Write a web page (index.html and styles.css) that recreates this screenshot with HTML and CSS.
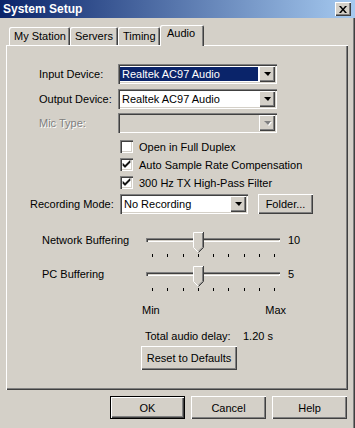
FILE: index.html
```html
<!DOCTYPE html>
<html lang="en">
<head>
    <meta charset="UTF-8">
    <title>System Setup</title>
    <link rel="stylesheet" href="styles.css">
</head>
<body>
    <div class="window">
        <div class="titlebar">
            <span class="title">System Setup</span>
            <div class="close">
                <svg width="8" height="7" viewBox="0 0 8 7"><path d="M0 0h2l2 2.5L6 0h2L5 3.5 8 7H6L4 4.5 2 7H0l3-3.5z" fill="#000"/></svg>
            </div>
        </div>

        <div class="tabs">
            <div class="tab tab-station">My Station</div>
            <div class="tab tab-servers">Servers</div>
            <div class="tab tab-timing">Timing</div>
            <div class="tab tab-audio active">Audio</div>
        </div>

        <div class="panel">
            <div class="device-row first">
                <span class="device-label">Input Device:</span>
                <div class="combo device-combo focused">
                    <span class="combo-text">Realtek AC97 Audio</span>
                    <span class="combo-btn"><span class="arrow"></span></span>
                </div>
            </div>
            <div class="device-row second">
                <span class="device-label">Output Device:</span>
                <div class="combo device-combo">
                    <span class="combo-text">Realtek AC97 Audio</span>
                    <span class="combo-btn"><span class="arrow"></span></span>
                </div>
            </div>
            <div class="device-row third">
                <span class="device-label disabled">Mic Type:</span>
                <div class="combo device-combo off">
                    <span class="combo-text"></span>
                    <span class="combo-btn"><span class="arrow"></span></span>
                </div>
            </div>

            <div class="checks">
                <div class="check"><span class="box"></span>Open in Full Duplex</div>
                <div class="check"><span class="box"><svg width="9" height="9" viewBox="0 0 9 9"><path d="M1 3.5v2l2 2 5-5v-2l-5 5z" fill="#000" stroke="#000" stroke-width=".6"/></svg></span>Auto Sample Rate Compensation</div>
                <div class="check"><span class="box"><svg width="9" height="9" viewBox="0 0 9 9"><path d="M1 3.5v2l2 2 5-5v-2l-5 5z" fill="#000" stroke="#000" stroke-width=".6"/></svg></span>300 Hz TX High-Pass Filter</div>
            </div>

            <div class="record-row">
                <span class="record-label">Recording Mode:</span>
                <div class="combo record-combo">
                    <span class="combo-text">No Recording</span>
                    <span class="combo-btn"><span class="arrow"></span></span>
                </div>
                <div class="button folder-btn">Folder...</div>
            </div>

            <div class="slider-row network">
                <span class="slider-label">Network Buffering</span>
                <div class="slider">
                    <div class="track"></div>
                    <svg class="thumb" width="11" height="21" viewBox="0 0 11 21">
                        <path d="M0 0h11v15.5L5.5 21 0 15.5z" fill="#d4d0c8"/>
                        <path d="M0.5 15.5V0.5h9.5" stroke="#fff" fill="none"/>
                        <path d="M0.5 15.5l5 5" stroke="#fff" fill="none"/>
                        <path d="M10.5 0v15.5l-5 5" stroke="#404040" fill="none"/>
                        <path d="M9.5 1v14.2l-4 4" stroke="#808080" fill="none"/>
                    </svg>
                    <div class="ticks">
                        <i></i><i></i><i></i><i></i><i></i><i></i><i></i><i></i><i></i>
                    </div>
                </div>
                <span class="slider-value">10</span>
            </div>

            <div class="slider-row">
                <span class="slider-label">PC Buffering</span>
                <div class="slider">
                    <div class="track"></div>
                    <svg class="thumb" width="11" height="21" viewBox="0 0 11 21">
                        <path d="M0 0h11v15.5L5.5 21 0 15.5z" fill="#d4d0c8"/>
                        <path d="M0.5 15.5V0.5h9.5" stroke="#fff" fill="none"/>
                        <path d="M0.5 15.5l5 5" stroke="#fff" fill="none"/>
                        <path d="M10.5 0v15.5l-5 5" stroke="#404040" fill="none"/>
                        <path d="M9.5 1v14.2l-4 4" stroke="#808080" fill="none"/>
                    </svg>
                    <div class="ticks">
                        <i></i><i></i><i></i><i></i><i></i><i></i><i></i><i></i><i></i>
                    </div>
                </div>
                <span class="slider-value">5</span>
            </div>

            <div class="scale">
                <span>Min</span>
                <span>Max</span>
            </div>

            <div class="delay-row">
                <span class="delay-label">Total audio delay:</span>
                <span>1.20 s</span>
            </div>

            <div class="reset-row">
                <div class="button reset-btn">Reset to Defaults</div>
            </div>
        </div>

        <div class="actions">
            <div class="button default">OK</div>
            <div class="button">Cancel</div>
            <div class="button">Help</div>
        </div>
    </div>
</body>
</html>
```

FILE: styles.css
```css
html, body {
    margin: 0;
}
body {
    width: 355px;
    height: 428px;
    overflow: hidden;
    background-color: #d4d0c8;
    font-family: 'Liberation Sans', Arial, sans-serif;
    font-size: 11px;
    color: #000;
}
.window {
    height: 428px;
    display: flex;
    flex-direction: column;
    box-shadow: inset -1px 0 #404040, inset -2px 0 #808080;
}

/* title bar */
.titlebar {
    height: 18px;
    display: flex;
    align-items: center;
    justify-content: space-between;
    padding: 0 4px 0 3px;
    background: linear-gradient(to right, #0a246a, #a6caf0);
}
.title {
    color: #fff;
    font-weight: bold;
    font-size: 12px;
}
.close {
    width: 16px;
    height: 14px;
    display: flex;
    align-items: center;
    justify-content: center;
    background-color: #d4d0c8;
    box-shadow: inset 1px 1px #fff, inset -1px -1px #404040, inset -2px -2px #808080;
}

/* tabs */
.tabs {
    display: flex;
    align-items: flex-end;
    height: 20px;
    margin-top: 7px;
    padding-left: 9px;
}
.tab {
    height: 18px;
    line-height: 18px;
    padding-left: 5px;
    box-sizing: border-box;
    border-radius: 2px 2px 0 0;
    box-shadow: inset 1px 1px #fff, inset -1px 0 #404040, inset -2px 0 #808080;
}
.tab-station { width: 61px; }
.tab-servers { width: 48px; }
.tab-timing { width: 42px; }
.tab-audio { width: 44px; padding-left: 7px; }
.tab.active {
    position: relative;
    z-index: 1;
    height: 21px;
    line-height: 17px;
    margin-bottom: -1px;
    background-color: #d4d0c8;
    box-shadow: inset 1px 1px #fff, inset -1px 0 #404040, inset -2px 0 #808080;
}

/* panel */
.panel {
    height: 345px;
    margin: 0 7px 0 6px;
    box-sizing: border-box;
    box-shadow: inset 1px 1px #fff, inset -1px -1px #404040, inset -2px -2px #808080;
}

/* combos */
.combo {
    height: 20px;
    box-sizing: border-box;
    display: flex;
    align-items: stretch;
    padding: 2px;
    background-color: #fff;
    box-shadow: inset 1px 1px #808080, inset 2px 2px #404040, inset -1px -1px #fff, inset -2px -2px #d4d0c8;
}
.combo-text {
    flex: 1;
    line-height: 16px;
    padding-left: 2px;
    white-space: nowrap;
    overflow: hidden;
}
.combo.focused .combo-text {
    background-color: #0a246a;
    color: #fff;
    margin: 1px 1px 1px 0;
    line-height: 14px;
}
.combo.off {
    background-color: #d4d0c8;
}
.combo-btn {
    width: 16px;
    display: flex;
    align-items: center;
    justify-content: center;
    background-color: #d4d0c8;
    box-shadow: inset 1px 1px #fff, inset -1px -1px #404040, inset -2px -2px #808080;
}
.arrow {
    width: 0;
    height: 0;
    border-left: 4px solid transparent;
    border-right: 3px solid transparent;
    border-top: 4px solid #000;
    margin-left: 1px;
}
.combo.off .arrow {
    border-top-color: #808080;
    filter: drop-shadow(1px 1px 0 #fff);
}

.device-row {
    display: flex;
    align-items: center;
    height: 20px;
    padding-left: 33px;
}
.device-row.first { margin-top: 19px; }
.device-row.second { margin-top: 5px; }
.device-row.third { margin-top: 4px; }
.device-label {
    width: 79px;
}
.device-combo {
    width: 159px;
}
.disabled {
    color: #808080;
    text-shadow: 1px 1px 0 #fff;
}

/* checkboxes */
.checks {
    margin-top: 7px;
    padding-left: 114px;
}
.check {
    display: flex;
    align-items: center;
    gap: 6px;
    height: 13px;
    margin-bottom: 5px;
}
.box {
    width: 13px;
    height: 13px;
    box-sizing: border-box;
    display: flex;
    align-items: center;
    justify-content: center;
    background-color: #fff;
    box-shadow: inset 1px 1px #808080, inset 2px 2px #404040, inset -1px -1px #fff, inset -2px -2px #d4d0c8;
}

/* recording */
.record-row {
    display: flex;
    align-items: center;
    height: 20px;
    margin-top: 2px;
    padding-left: 24px;
}
.record-label {
    width: 90px;
}
.record-combo {
    width: 128px;
}
.button {
    box-sizing: border-box;
    display: flex;
    align-items: center;
    justify-content: center;
    background-color: #d4d0c8;
    box-shadow: inset 1px 1px #fff, inset -1px -1px #404040, inset -2px -2px #808080;
}
.folder-btn {
    width: 55px;
    height: 20px;
    margin-left: 10px;
}

/* sliders */
.slider-row {
    display: flex;
    height: 34px;
    padding-left: 36px;
}
.slider-row.network {
    margin-top: 16px;
}
.slider-label,
.slider-value {
    line-height: 20px;
    height: 20px;
}
.slider-label {
    width: 104px;
}
.slider-value {
    margin-left: 8px;
}
.slider {
    position: relative;
    width: 134px;
}
.track {
    margin-top: 8px;
    height: 4px;
    box-sizing: border-box;
    box-shadow: inset 1px 1px #808080, inset 2px 2px #404040, inset -1px -1px #fff, inset -2px -2px #d4d0c8;
}
.thumb {
    position: absolute;
    left: 47px;
    top: 2px;
}
.ticks {
    display: flex;
    justify-content: space-between;
    margin: 12px 5px 0 6px;
}
.ticks i {
    width: 1px;
    height: 3px;
    background-color: #000;
}

.scale {
    display: flex;
    justify-content: space-between;
    width: 144px;
    height: 20px;
    line-height: 20px;
    margin: 2px 0 0 136px;
}
.delay-row {
    display: flex;
    height: 20px;
    line-height: 20px;
    margin-top: 6px;
    padding-left: 139px;
}
.delay-label {
    width: 98px;
}
.reset-row {
    padding-left: 135px;
}
.reset-btn {
    width: 96px;
    height: 24px;
}

/* bottom buttons */
.actions {
    display: flex;
    justify-content: flex-end;
    gap: 6px;
    margin-top: 6px;
    padding-right: 8px;
}
.actions .button {
    width: 75px;
    height: 23px;
}
.actions .button.default {
    box-shadow: inset 0 0 0 1px #000, inset 2px 2px #fff, inset -2px -2px #404040, inset -3px -3px #808080;
}
```
